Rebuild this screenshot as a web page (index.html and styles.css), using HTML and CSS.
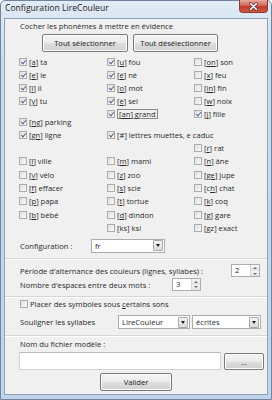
FILE: index.html
```html
<!DOCTYPE html>
<html lang="fr">
<head>
    <meta charset="UTF-8">
    <title>Configuration LireCouleur</title>
    <link rel="stylesheet" href="styles.css">
</head>
<body>

    <div class="window">

        <!-- Title bar -->
        <div class="titlebar">
            <span class="title">Configuration LireCouleur</span>
            <span class="close">
                <svg width="11" height="9" viewBox="0 0 11 9">
                    <path d="M2.5 1.5L8.5 7.5M8.5 1.5L2.5 7.5" stroke="#5b2b28" stroke-width="3" stroke-linecap="round"/>
                    <path d="M2.5 1.5L8.5 7.5M8.5 1.5L2.5 7.5" stroke="#fff" stroke-width="1.6" stroke-linecap="round"/>
                </svg>
            </span>
        </div>

        <div class="client">
            <p class="heading">Cocher les phonèmes à mettre en évidence</p>

            <div class="top-btns">
                <button class="btn sel-all">Tout sélectionner</button>
                <button class="btn unsel-all">Tout désélectionner</button>
            </div>

            <!-- Voyelles -->
            <div class="grid g1">
                <label class="ck on"><i></i><span>[<u>a</u>] ta</span></label>
                <label class="ck on"><i></i><span>[<u>u</u>] fou</span></label>
                <label class="ck"><i></i><span>[<u>on</u>] son</span></label>

                <label class="ck on"><i></i><span>[<u>e</u>] le</span></label>
                <label class="ck on"><i></i><span>[<u>é</u>] né</span></label>
                <label class="ck"><i></i><span>[<u>x</u>] feu</span></label>

                <label class="ck on"><i></i><span>[<u>i</u>] il</span></label>
                <label class="ck on"><i></i><span>[<u>o</u>] mot</span></label>
                <label class="ck"><i></i><span>[<u>in</u>] fin</span></label>

                <label class="ck on"><i></i><span>[<u>y</u>] tu</span></label>
                <label class="ck on"><i></i><span>[<u>è</u>] sel</span></label>
                <label class="ck"><i></i><span>[<u>w</u>] noix</span></label>

                <label class="ck on low"><i></i><span>[<u>ng</u>] parking</span></label>
                <label class="ck on high"><i></i><span class="focus">[<u>an</u>] grand</span></label>
                <label class="ck on high"><i></i><span>[<u>j</u>] fille</span></label>

                <label class="ck on"><i></i><span>[<u>gn</u>] ligne</span></label>
                <label class="ck on wide"><i></i><span>[#] lettres muettes, e caduc</span></label>
            </div>

            <!-- Consonnes -->
            <div class="grid g2">
                <label class="ck col3"><i></i><span>[<u>r</u>] rat</span></label>

                <label class="ck"><i></i><span>[<u>l</u>] ville</span></label>
                <label class="ck"><i></i><span>[<u>m</u>] mami</span></label>
                <label class="ck"><i></i><span>[<u>n</u>] âne</span></label>

                <label class="ck"><i></i><span>[<u>v</u>] vélo</span></label>
                <label class="ck"><i></i><span>[<u>z</u>] zoo</span></label>
                <label class="ck"><i></i><span>[<u>ge</u>] jupe</span></label>

                <label class="ck"><i></i><span>[<u>f</u>] effacer</span></label>
                <label class="ck"><i></i><span>[<u>s</u>] scie</span></label>
                <label class="ck"><i></i><span>[c<u>h</u>] chat</span></label>

                <label class="ck"><i></i><span>[<u>p</u>] papa</span></label>
                <label class="ck"><i></i><span>[<u>t</u>] tortue</span></label>
                <label class="ck"><i></i><span>[<u>k</u>] coq</span></label>

                <label class="ck"><i></i><span>[<u>b</u>] bébé</span></label>
                <label class="ck"><i></i><span>[<u>d</u>] dindon</span></label>
                <label class="ck"><i></i><span>[<u>g</u>] gare</span></label>

                <label class="ck col2"><i></i><span>[ks] ksi</span></label>
                <label class="ck"><i></i><span>[gz] exact</span></label>
            </div>

            <div class="row config-row">
                <span class="lbl">Configuration :</span>
                <span class="combo cfg"><span class="val">fr</span><span class="arrow"></span></span>
            </div>

            <div class="sep"></div>

            <div class="row periode-row">
                <span class="lbl">Période d'alternance des couleurs (lignes, syllabes) :</span>
                <span class="spinbox"><span class="val">2</span><span class="spin"><b class="up"></b><b class="down"></b></span></span>
            </div>
            <div class="row nombre-row">
                <span class="lbl">Nombre d'espaces entre deux mots :</span>
                <span class="spinbox"><span class="val">3</span><span class="spin"><b class="up"></b><b class="down"></b></span></span>
            </div>

            <div class="sep sep2"></div>

            <div class="row placer-row">
                <label class="ck"><i></i><span>Placer des symboles sous <u>c</u>ertains sons</span></label>
            </div>

            <div class="row souligner-row">
                <span class="lbl">Souligner les syllabes</span>
                <span class="combo syl1"><span class="val">LireCouleur</span><span class="arrow"></span></span>
                <span class="combo syl2"><span class="val">écrites</span><span class="arrow"></span></span>
            </div>

            <div class="sep sep3"></div>

            <p class="nom">Nom du fichier modèle :</p>
            <div class="file-row">
                <input type="text" class="file-input">
                <button class="btn browse">...</button>
            </div>

            <div class="valider-row">
                <button class="btn valider">Valider</button>
            </div>
        </div>
    </div>

</body>
</html>
```

FILE: styles.css
```css
* {
    margin: 0;
    padding: 0;
    box-sizing: border-box;
}

body {
    font-family: "Open Sans", "Liberation Sans", sans-serif;
    font-size: 7.6px;
    color: #282828;
    background: #ffffff;
}

/* Window frame */
.window {
    width: 272px;
    height: 400px;
    border: 1px solid #71849d;
    border-radius: 5px 5px 0 0;
    background: linear-gradient(#e2ebf6, #cbdbee 60px, #c0d3ea);
    display: flex;
    flex-direction: column;
}

.titlebar {
    height: 17px;
    display: flex;
    justify-content: space-between;
    align-items: flex-start;
}

.title {
    font-size: 8.6px;
    line-height: 15px;
    padding-left: 4px;
    color: #1b1b1b;
}

.close {
    width: 29px;
    height: 13px;
    margin-top: -1px;
    margin-right: 3px;
    border: 1px solid #8b3b34;
    border-top: none;
    border-radius: 0 0 4px 4px;
    background: linear-gradient(#e9a99c 0%, #d26a5b 45%, #c2392a 55%, #cf5a3e 100%);
    display: flex;
    align-items: center;
    justify-content: center;
}

.client {
    flex: 1;
    margin: 0 3px 4px 3px;
    border: 1px solid #8fa2ba;
    background: #f0f0f0;
}

.heading {
    margin: 1px 0 0 15px;
    line-height: 12px;
}

.top-btns {
    display: flex;
    gap: 5px;
    margin-top: 2px;
    padding-left: 37px;
}

/* Push buttons */
.btn {
    font: inherit;
    color: #1a1a1a;
    height: 18px;
    border: 1px solid #7a7a7a;
    border-radius: 2px;
    background: linear-gradient(#f4f4f4 0%, #ececec 48%, #dedede 52%, #d1d1d1 100%);
    box-shadow: inset 0 0 0 1px #fbfbfb;
}

.sel-all { width: 86px; }
.unsel-all { width: 85px; }

/* Phoneme grids */
.grid {
    display: grid;
    grid-template-columns: 88px 87px 1fr;
    padding-left: 14px;
}

.g1 {
    margin-top: 3px;
    grid-template-rows: repeat(4, 13.2px) 21px 12.5px;
}

.g2 {
    grid-template-rows: repeat(7, 13.33px);
}

.ck {
    display: flex;
    align-items: center;
    white-space: nowrap;
}

.ck i {
    position: relative;
    width: 8px;
    height: 8px;
    margin-right: 2px;
    border: 1px solid #acacac;
    background: linear-gradient(135deg, #e0e0e0, #f9f9f9);
    flex-shrink: 0;
}

.ck.on i::after {
    content: "";
    position: absolute;
    left: 2px;
    top: 0;
    width: 2px;
    height: 4px;
    border: solid #4e6592;
    border-width: 0 1.2px 1.2px 0;
    transform: rotate(40deg);
}

.ck.high {
    align-self: start;
    height: 13.2px;
}

.ck.low {
    align-self: end;
    height: 13.2px;
}

.ck.wide { grid-column: 2 / 4; }
.ck.col2 { grid-column: 2; }
.ck.col3 { grid-column: 3; }

.focus {
    border: 1px solid #888888;
    padding: 0 1px;
    line-height: 8px;
}

/* Form rows */
.row {
    display: flex;
    align-items: center;
    padding-left: 15px;
}

.config-row {
    margin-top: 4px;
    height: 14px;
}

.config-row .lbl { width: 71px; }

.combo {
    display: flex;
    align-items: center;
    height: 14px;
    border: 1px solid #abadb3;
    background: #ffffff;
}

.combo .val {
    flex: 1;
    padding-left: 3px;
    white-space: nowrap;
}

.combo .arrow {
    width: 10px;
    height: 11px;
    margin-right: 1px;
    border: 1px solid #a8a8a8;
    border-radius: 1px;
    background: linear-gradient(#f4f4f4, #dadada);
    display: flex;
    align-items: center;
    justify-content: center;
}

.combo .arrow::after {
    content: "";
    border-left: 2.5px solid transparent;
    border-right: 2.5px solid transparent;
    border-top: 3px solid #1e1e1e;
}

.cfg { width: 74px; }

.sep {
    margin-top: 5.5px;
    border-top: 1px solid #d5d5d5;
    border-bottom: 1px solid #ffffff;
}

.periode-row {
    margin-top: 4.4px;
    height: 13px;
}

.periode-row .lbl { width: 211px; }

.nombre-row {
    margin-top: 0.5px;
    height: 13.5px;
}

.nombre-row .lbl { width: 152px; }

.spinbox {
    display: flex;
    width: 29px;
    height: 13px;
    border: 1px solid #abadb3;
    background: #ffffff;
}

.spinbox .val {
    flex: 1;
    padding-left: 3px;
    line-height: 11px;
}

.spin {
    width: 9px;
    display: flex;
    flex-direction: column;
    border-left: 1px solid #d6d6d6;
}

.spin b {
    flex: 1;
    display: flex;
    align-items: center;
    justify-content: center;
    background: linear-gradient(#f6f6f6, #e2e2e2);
}

.spin .up::after {
    content: "";
    border-left: 2px solid transparent;
    border-right: 2px solid transparent;
    border-bottom: 2px solid #6d6d6d;
}

.spin .down::after {
    content: "";
    border-left: 2px solid transparent;
    border-right: 2px solid transparent;
    border-top: 2px solid #6d6d6d;
}

.sep2 { margin-top: 4.5px; }

.placer-row {
    margin-top: 0.5px;
    height: 12px;
}

.souligner-row {
    margin-top: 5px;
    height: 14px;
}

.souligner-row .lbl { width: 98px; }
.syl1 { width: 72px; margin-right: 2px; }
.syl2 { width: 69px; }

.sep3 { margin-top: 6px; }

.nom {
    margin: 1px 0 0 15px;
    line-height: 12px;
}

.file-row {
    display: flex;
    align-items: flex-start;
    margin-top: 2px;
    padding-left: 14px;
}

.file-input {
    width: 202px;
    height: 18px;
    border: 1px solid #d0d0d0;
    border-top-color: #b8b8b8;
    background: #ffffff;
}

.browse {
    width: 40px;
    height: 17px;
    margin: 1px 0 0 3px;
}

.valider-row {
    display: flex;
    justify-content: center;
    margin-top: 3px;
}

.valider { width: 72px; }
```
